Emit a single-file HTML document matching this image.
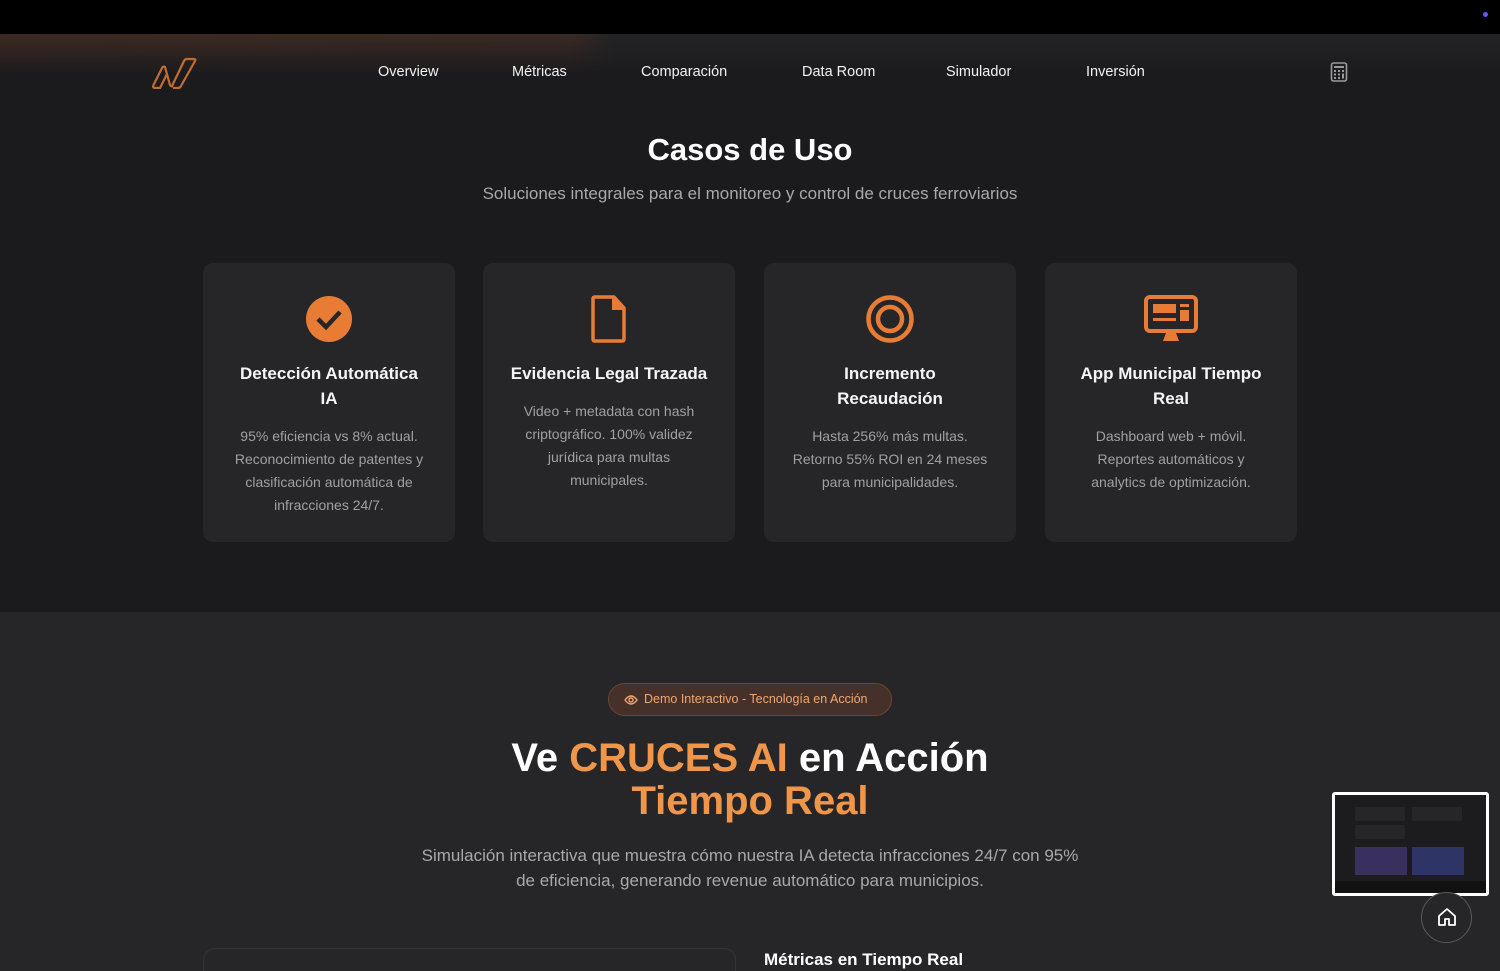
<!DOCTYPE html>
<html><head><meta charset="utf-8"><style>
*{margin:0;padding:0;box-sizing:border-box}
html,body{width:1500px;height:971px;overflow:hidden}
body{background:#1b1b1d;font-family:"Liberation Sans",sans-serif;color:#fff;position:relative}
.top{position:absolute;left:0;top:0;width:1500px;height:34px;background:#000}
.dot{position:absolute;left:1483px;top:12px;width:5px;height:5px;border-radius:50%;background:#5b5bf0}
.hdr{position:absolute;left:0;top:34px;width:1500px;height:80px;background:linear-gradient(180deg,rgba(27,27,29,0) 0,#1b1b1d 40px),linear-gradient(90deg,#3d2a22 0,#3a2a24 38%,#232325 41%);}
.nav a{position:absolute;top:64px;font-size:14.5px;color:#f2f2f2}
h1{position:absolute;top:132px;width:1500px;text-align:center;font-size:31px;font-weight:bold}
.sub{position:absolute;top:184px;width:1500px;text-align:center;font-size:17px;color:#a8a8ad}
.card{position:absolute;top:263px;width:252px;height:279px;background:#262628;border-radius:10px;text-align:center}
.card svg{position:absolute;left:102px;top:32px}
.card h3{margin-top:98px;font-size:17px;line-height:25px;font-weight:bold;color:#f5f5f5;white-space:nowrap}
.card p{margin-top:14px;font-size:14px;line-height:23px;color:#a0a0a5;white-space:nowrap}
.s2{position:absolute;left:0;top:612px;width:1500px;height:359px;background:#262628}
.badge{position:absolute;left:608px;top:683px;width:284px;height:33px;border-radius:17px;background:#45302a;border:1px solid #6a4530;color:#f0a870;font-size:12.5px;line-height:31px;padding-left:35px}
.big{position:absolute;top:737px;width:1500px;text-align:center;font-size:40px;font-weight:bold;line-height:43px}
.or{color:#f0964a}
.desc{position:absolute;top:843px;width:1500px;text-align:center;font-size:17px;line-height:25px;color:#a8a8ad}
.box{position:absolute;left:203px;top:948px;width:533px;height:40px;border:1px solid #333336;border-radius:12px}
.mt{position:absolute;left:764px;top:950px;font-size:17px;font-weight:bold}
.thumb{position:absolute;left:1332px;top:792px;width:157px;height:104px;border:3px solid #fff;border-radius:3px;background:#1c1c1e;overflow:hidden}
.home{position:absolute;left:1421px;top:892px;width:51px;height:51px;border-radius:50%;border:1px solid #5a5a5e;background:#262628}
</style></head><body>
<div class="top"></div><div class="dot"></div>
<div class="hdr"></div>
<svg style="position:absolute;left:150px;top:57px" width="48" height="32" viewBox="0 0 48 32"><path d="M3 29 L12 11 Q13 9 15 10 L20 28 Q21 30 23 29" fill="none" stroke="#c06c33" stroke-width="2.2" stroke-linejoin="round"/><path d="M3 29 Q3 31 5 31 L10 31 L17 17" fill="none" stroke="#c06c33" stroke-width="2.2"/><path d="M22 29 L34 4 Q35 2 37 2 L44 2 Q46 2 45 4 L31 29 Q30 31 28 31 L23 31" fill="none" stroke="#c06c33" stroke-width="2.2" stroke-linejoin="round"/></svg>
<div class="nav"><a style="left:378px">Overview</a><a style="left:512px">Métricas</a><a style="left:641px">Comparación</a><a style="left:802px">Data Room</a><a style="left:946px">Simulador</a><a style="left:1086px">Inversión</a></div>
<svg style="position:absolute;left:1330px;top:62px" width="18" height="20" viewBox="0 0 18 20"><rect x="1.5" y="1" width="15" height="18" rx="2" fill="none" stroke="#9a9a9e" stroke-width="1.6"/><rect x="4" y="4" width="10" height="2" fill="#9a9a9e"/><g fill="#9a9a9e"><rect x="4" y="8" width="2" height="2"/><rect x="8" y="8" width="2" height="2"/><rect x="12" y="8" width="2" height="2"/><rect x="4" y="11.5" width="2" height="2"/><rect x="8" y="11.5" width="2" height="2"/><rect x="12" y="11.5" width="2" height="5"/><rect x="4" y="15" width="2" height="2"/><rect x="8" y="15" width="2" height="2"/></g></svg>
<h1>Casos de Uso</h1>
<div class="sub">Soluciones integrales para el monitoreo y control de cruces ferroviarios</div>
<div class="card" style="left:203px"><svg width="48" height="48" viewBox="0 0 48 48"><circle cx="24" cy="24" r="23" fill="#e87c35"/><path d="M13 24 L21 32 L35 17" fill="none" stroke="#262628" stroke-width="4.5"/></svg><h3>Detección Automática<br>IA</h3><p>95% eficiencia vs 8% actual.<br>Reconocimiento de patentes y<br>clasificación automática de<br>infracciones 24/7.</p></div>
<div class="card" style="left:483px"><svg width="48" height="48" viewBox="0 0 48 48"><path d="M10 2 H29 L39 13 V44 Q39 46 37 46 H10 Q8 46 8 44 V4 Q8 2 10 2 Z" fill="none" stroke="#e87c35" stroke-width="3.5" stroke-linejoin="round"/><path d="M28 3 V14 H38" fill="#e87c35" stroke="#e87c35" stroke-width="2"/></svg><h3>Evidencia Legal Trazada</h3><p>Video + metadata con hash<br>criptográfico. 100% validez<br>jurídica para multas<br>municipales.</p></div>
<div class="card" style="left:764px"><svg width="48" height="48" viewBox="0 0 48 48"><circle cx="24" cy="24" r="21.5" fill="none" stroke="#e87c35" stroke-width="4.5"/><circle cx="24" cy="24" r="12" fill="none" stroke="#e87c35" stroke-width="4.5"/></svg><h3>Incremento<br>Recaudación</h3><p>Hasta 256% más multas.<br>Retorno 55% ROI en 24 meses<br>para municipalidades.</p></div>
<div class="card" style="left:1045px"><svg width="54" height="48" viewBox="0 0 54 48" style="left:99px"><rect x="2" y="2" width="50" height="34" rx="4" fill="none" stroke="#e87c35" stroke-width="4"/><rect x="9" y="9" width="23" height="9" fill="#e87c35"/><rect x="9" y="23" width="23" height="3" fill="#e87c35"/><rect x="36" y="9" width="9" height="3" fill="#e87c35"/><rect x="36" y="15" width="9" height="11" fill="#e87c35"/><path d="M22 38 H32 L35 46 H19 Z" fill="#e87c35"/></svg><h3>App Municipal Tiempo<br>Real</h3><p>Dashboard web + móvil.<br>Reportes automáticos y<br>analytics de optimización.</p></div>
<div class="s2"></div>
<div class="badge"><svg style="position:absolute;left:15px;top:10px" width="14" height="12" viewBox="0 0 14 12"><path d="M1 6 Q7 -2 13 6 Q7 14 1 6 Z" fill="none" stroke="#f0a870" stroke-width="1.4"/><circle cx="7" cy="6" r="2" fill="none" stroke="#f0a870" stroke-width="1.4"/></svg>Demo Interactivo - Tecnología en Acción</div>
<div class="big">Ve <span class="or">CRUCES AI</span> en Acción<br><span class="or">Tiempo Real</span></div>
<div class="desc">Simulación interactiva que muestra cómo nuestra IA detecta infracciones 24/7 con 95%<br>de eficiencia, generando revenue automático para municipios.</div>
<div class="box"></div>
<div class="mt">Métricas en Tiempo Real</div>
<div class="thumb"><div style="position:absolute;left:20px;top:52px;width:52px;height:28px;background:#3a3060"></div><div style="position:absolute;left:77px;top:52px;width:52px;height:28px;background:#2e3566"></div><div style="position:absolute;left:20px;top:12px;width:50px;height:14px;background:#262628"></div><div style="position:absolute;left:77px;top:12px;width:50px;height:14px;background:#262628"></div><div style="position:absolute;left:20px;top:30px;width:50px;height:14px;background:#262628"></div><div style="position:absolute;left:0;top:86px;width:157px;height:14px;background:#111"></div></div>
<div class="home"><svg style="position:absolute;left:15px;top:14px" width="20" height="20" viewBox="0 0 20 20"><path d="M2 9 L10 2 L18 9 V18 H12 V12 H8 V18 H2 Z" fill="none" stroke="#fff" stroke-width="1.8" stroke-linejoin="round"/></svg></div>
</body></html>
